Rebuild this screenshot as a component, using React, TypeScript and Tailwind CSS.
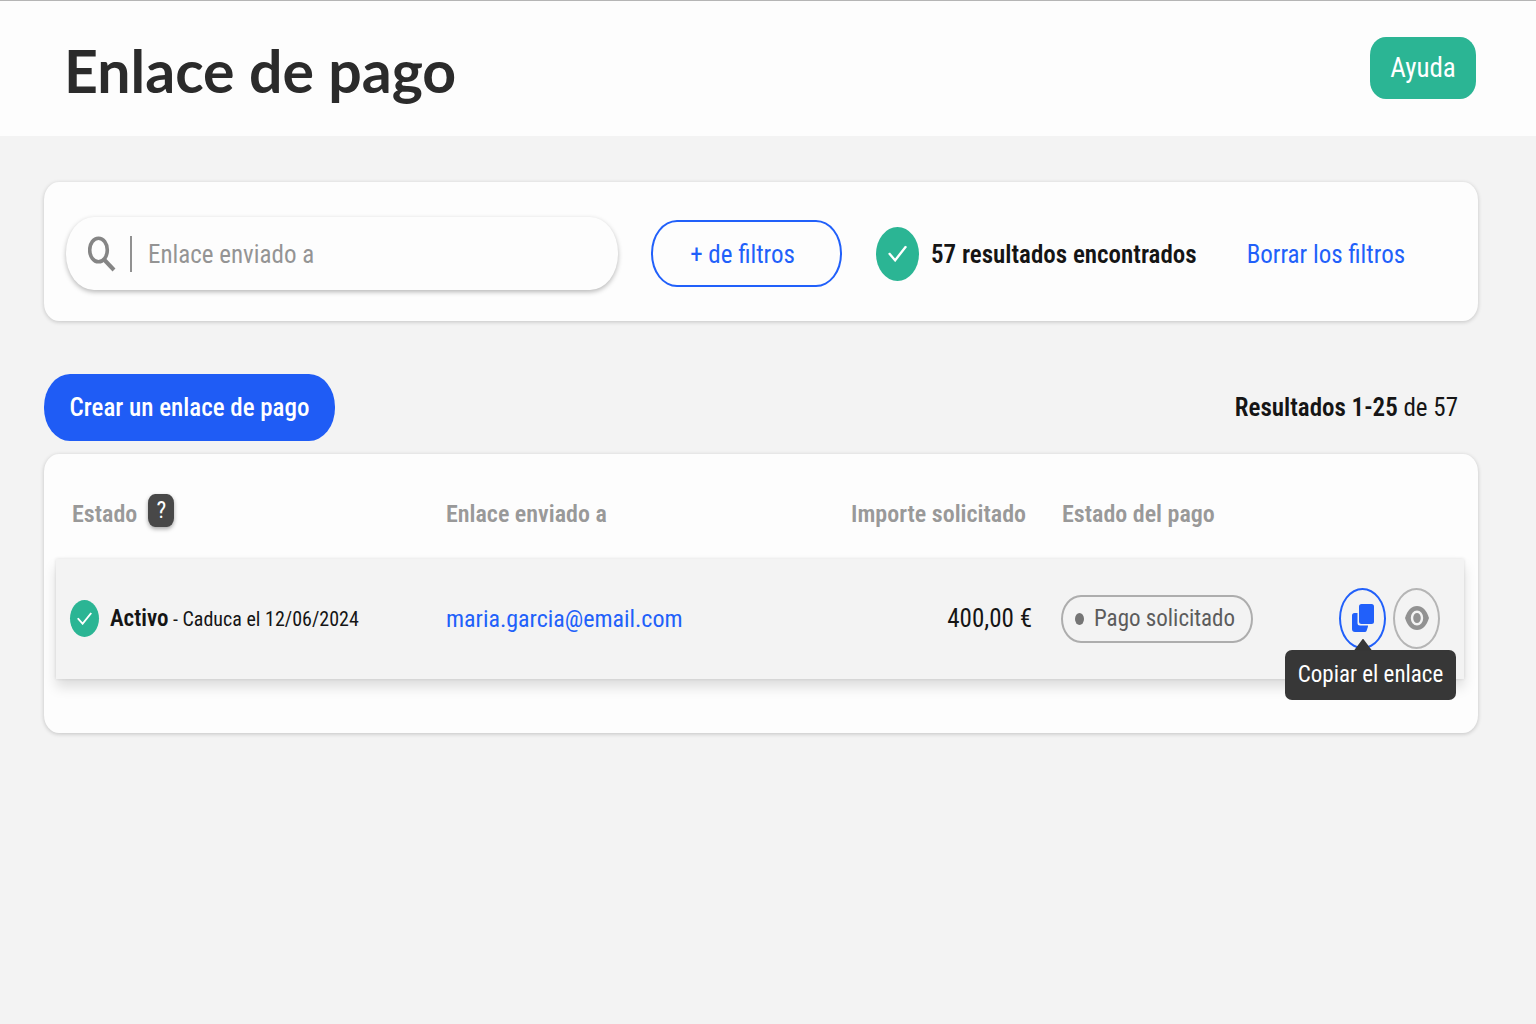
function CheckBadge({ className, iconClass }: { className: string; iconClass: string }) {
  return (
    <span className={`flex shrink-0 items-center justify-center rounded-[50%] bg-[#2bb594] ${className}`}>
      <svg viewBox="0 0 20 20" preserveAspectRatio="none" className={iconClass} fill="none" stroke="white" strokeWidth="2.6" aria-hidden="true">
        <path d="M1 9.5 7.5 18 19 1.5" />
      </svg>
    </span>
  );
}

function SearchIcon() {
  return (
    <svg width="28" height="36" viewBox="0 0 28 36" fill="none" stroke="#858585" aria-hidden="true">
      <ellipse cx="10.5" cy="14" rx="8.8" ry="11.8" strokeWidth="3.6" />
      <path d="M16 23.500 26 34" strokeWidth="4" />
    </svg>
  );
}

function CopyIcon() {
  return (
    <svg width="24" height="30" viewBox="0 0 24 30" fill="#2160fa" aria-hidden="true">
      <rect x="8" y="1" width="15" height="20" rx="2.5" />
      <path d="M3.500 10H6.500v10A2.500 2.500 0 0 0 9 22.500H17c0 1 0 1.500-.5 2.500L15.500 28c-.4.700-1 1-2 1H4a3 3 0 0 1-3-3V12.500A2.500 2.500 0 0 1 3.500 10Z" />
    </svg>
  );
}

function EyeIcon() {
  return (
    <svg width="24" height="26" viewBox="0 0 24 26" aria-hidden="true">
      <path d="M0 13C2.500 5 6.500 1 12 1s9.500 4 12 12c-2.500 8-6.500 12-12 12S2.500 21 0 13Z" fill="#929292" />
      <ellipse cx="12" cy="13" rx="5" ry="6.200" fill="#929292" stroke="#f3f3f3" strokeWidth="2.400" />
    </svg>
  );
}

export default function App() {
  return (
    <div className="min-h-screen bg-[#f3f3f3] font-['Roboto_Condensed',Roboto,sans-serif] text-[25px] leading-9 text-[#151515]">
      <header className="flex h-[136px] items-center justify-between border-t border-[#b5b5b5] bg-[#fdfdfd] pr-[60px] pl-16">
        <h1 className="pt-1 font-[Lato,sans-serif] text-[59px] leading-[72px] font-bold text-[#2b2b2b]">Enlace de pago</h1>
        <button className="mb-0.5 h-[62px] w-[106px] rounded-[16px/18px] bg-[#2bb594] text-[27px] text-white">Ayuda</button>
      </header>

      <main className="pt-[46px] pr-[58px] pl-11">
        <section className="flex h-[139px] items-center rounded-[15px/18px] bg-[#fdfdfd] px-[22px] pt-1 shadow-[0_1px_4px_rgba(0,0,0,0.2)]">
          <label className="flex h-[73px] w-[552px] items-center rounded-[28px/36px] pl-[22px] shadow-[0_2px_5px_rgba(0,0,0,0.28)]">
            <SearchIcon />
            <span className="ml-3.5 h-9 w-0.5 bg-[#919191]" />
            <input
              type="text"
              aria-label="Enlace enviado a"
              placeholder="Enlace enviado a"
              className="ml-4 min-w-0 flex-1 bg-transparent pt-0.5 outline-none placeholder:text-[#949494]"
            />
          </label>
          <button className="ml-[33px] h-[67px] w-[191px] rounded-[26px/33px] border-2 border-[#2160fa] pt-0.5 pr-2 text-[#2160fa]">
            + de filtros
          </button>
          <CheckBadge className="ml-[34px] h-[54px] w-[43px]" iconClass="h-[17px] w-[19px]" />
          <strong className="ml-3 pt-0.5 font-semibold whitespace-nowrap">57 resultados encontrados</strong>
          <a href="#" className="ml-[50px] pt-0.5 whitespace-nowrap text-[#2160fa]">Borrar los filtros</a>
        </section>

        <div className="mt-[53px] flex items-center justify-between pr-5">
          <button className="h-[67px] w-[291px] rounded-[26px/33px] bg-[#1f5cf5] font-medium text-white">
            Crear un enlace de pago
          </button>
          <p>
            <strong className="font-semibold">Resultados 1-25</strong> de 57
          </p>
        </div>

        <section className="mt-[13px] rounded-[15px/18px] bg-[#fdfdfd] pr-3.5 pb-[54px] pl-3 shadow-[0_1px_4px_rgba(0,0,0,0.2)]">
          <table className="w-full table-fixed">
            <colgroup>
              <col className="w-[374px]" />
              <col />
              <col className="w-[220px]" />
              <col className="w-[222px]" />
              <col className="w-[196px]" />
            </colgroup>
            <thead>
              <tr className="h-[105px] text-left text-2xl text-[#999999]">
                <th className="px-4 pt-3.5 font-semibold">
                  <span className="flex items-center gap-[11px]">
                    Estado
                    <button
                      aria-label="Ayuda sobre el estado"
                      className="mb-1.5 h-[33px] w-[26px] rounded-[7px/9px] bg-[#484848] text-[23px] leading-8 font-normal text-white shadow-[0_2px_4px_rgba(0,0,0,0.35)]"
                    >
                      ?
                    </button>
                  </span>
                </th>
                <th className="px-4 pt-3.5 font-semibold">Enlace enviado a</th>
                <th className="pt-3.5 pr-5 text-right font-semibold">Importe solicitado</th>
                <th className="px-4 pt-3.5 font-semibold">Estado del pago</th>
                <th aria-label="Acciones" />
              </tr>
            </thead>
            <tbody>
              <tr className="h-[120px] bg-[#f3f3f3] shadow-[0_8px_12px_rgba(0,0,0,0.13),0_0_3px_rgba(0,0,0,0.12)]">
                <td className="pl-3.5">
                  <span className="flex items-center pb-0.5 whitespace-nowrap">
                    <CheckBadge className="mr-[11px] h-[37px] w-[29px]" iconClass="h-[13px] w-[15px]" />
                    <span className="pt-0.5 text-xl">
                      <strong className="text-[23px] font-semibold">Activo</strong> - Caduca el 12/06/2024
                    </span>
                  </span>
                </td>
                <td className="px-4">
                  <a href="mailto:maria.garcia@email.com" className="text-2xl text-[#2160fa]">maria.garcia@email.com</a>
                </td>
                <td className="pr-3.5 text-right">400,00 €</td>
                <td className="pl-[15px]">
                  <span className="inline-flex h-12 w-48 items-center rounded-[20px/24px] border-2 border-[#adadad] pl-3 text-[23px] whitespace-nowrap text-[#5c5c5c]">
                    <span className="mr-2.5 h-3 w-[9px] rounded-[50%] bg-[#757575]" />
                    Pago solicitado
                  </span>
                </td>
                <td className="pr-6 pb-0.5">
                  <div className="flex justify-end gap-[7px]">
                    <div className="relative">
                      <button
                        aria-label="Copiar el enlace"
                        aria-describedby="copy-tip"
                        className="flex h-[61px] w-[47px] items-center justify-center rounded-[50%] border-2 border-[#2160fa]"
                      >
                        <CopyIcon />
                      </button>
                      <div
                        id="copy-tip"
                        role="tooltip"
                        className="absolute top-[62px] -right-[70px] flex h-[50px] w-[171px] items-center justify-center rounded-[7px] bg-[#373737] text-[23px] whitespace-nowrap text-white"
                      >
                        <span className="absolute -top-[11px] left-[69px] h-3 w-[18px] bg-[#373737] [clip-path:polygon(50%_0,100%_100%,0_100%)]" />
                        Copiar el enlace
                      </div>
                    </div>
                    <button
                      aria-label="Ver el enlace"
                      className="flex h-[61px] w-[47px] items-center justify-center rounded-[50%] border-2 border-[#b5b5b5]"
                    >
                      <EyeIcon />
                    </button>
                  </div>
                </td>
              </tr>
            </tbody>
          </table>
        </section>
      </main>
    </div>
  );
}
